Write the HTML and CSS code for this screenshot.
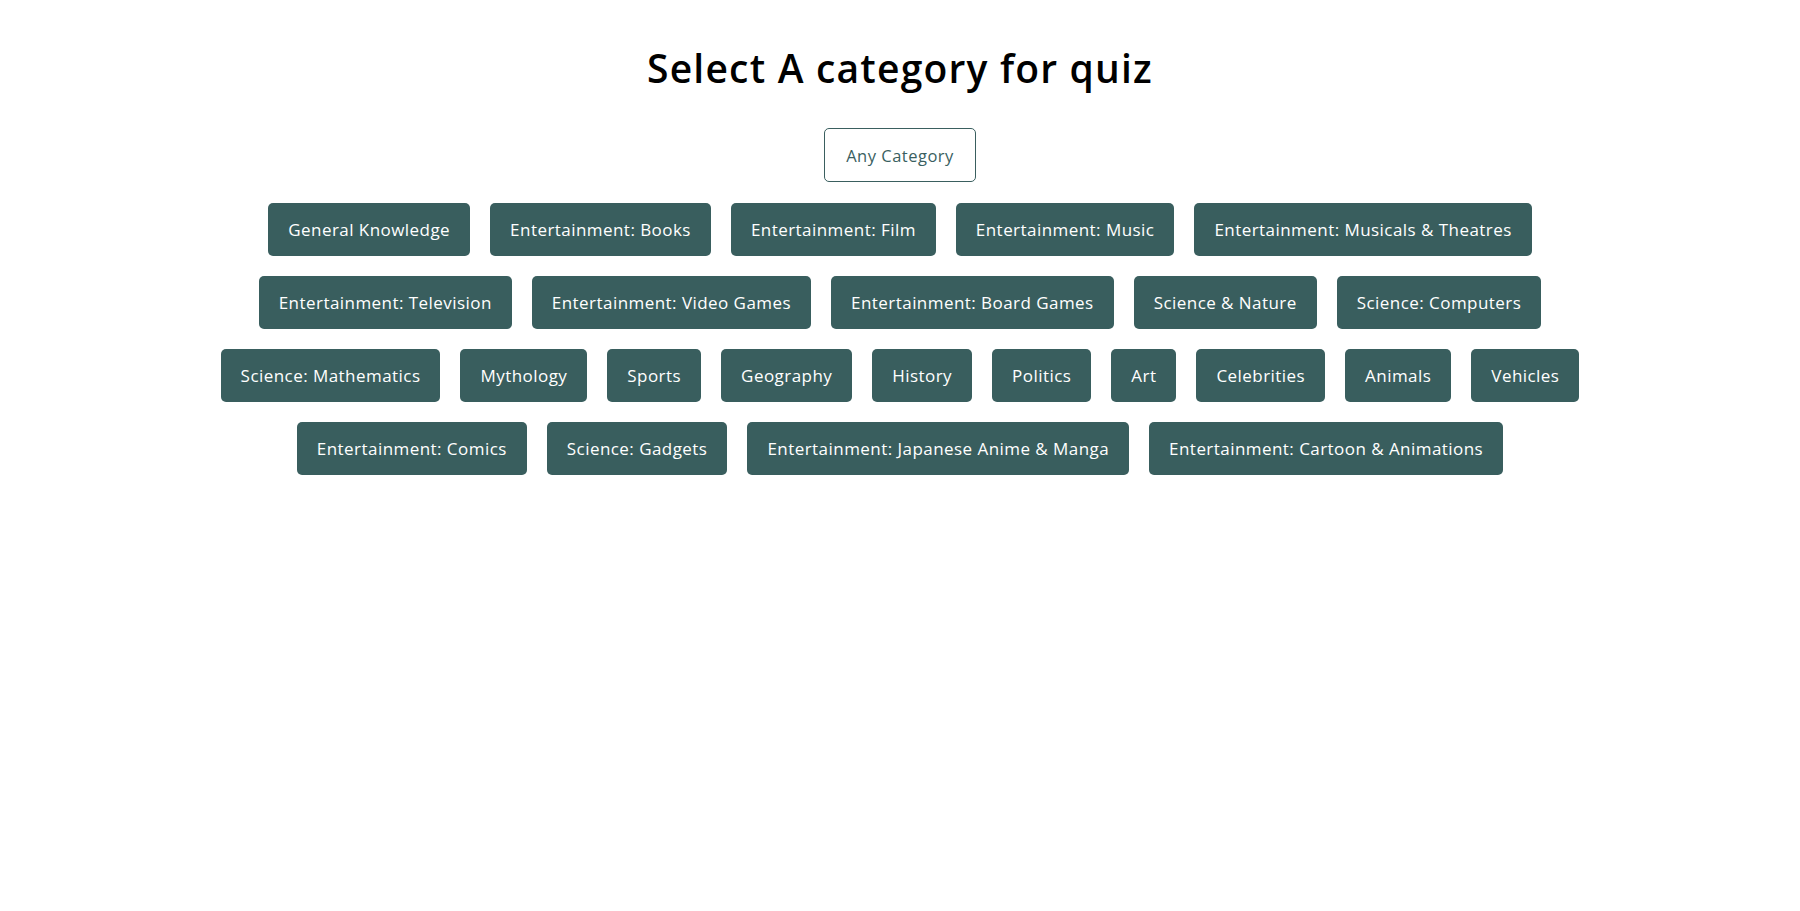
FILE: index.html
```html
<!DOCTYPE html>
<html lang="en">
<head>
<meta charset="utf-8">
<title>Quiz Categories</title>
<link rel="stylesheet" href="styles.css">
</head>
<body>
<main class="page">
  <h1 class="title">Select A category for quiz</h1>
  <button class="any-btn">Any Category</button>
  <div class="categories">
    <button class="cat-btn">General Knowledge</button>
    <button class="cat-btn">Entertainment: Books</button>
    <button class="cat-btn">Entertainment: Film</button>
    <button class="cat-btn">Entertainment: Music</button>
    <button class="cat-btn">Entertainment: Musicals &amp; Theatres</button>
    <button class="cat-btn">Entertainment: Television</button>
    <button class="cat-btn">Entertainment: Video Games</button>
    <button class="cat-btn">Entertainment: Board Games</button>
    <button class="cat-btn">Science &amp; Nature</button>
    <button class="cat-btn">Science: Computers</button>
    <button class="cat-btn">Science: Mathematics</button>
    <button class="cat-btn">Mythology</button>
    <button class="cat-btn">Sports</button>
    <button class="cat-btn">Geography</button>
    <button class="cat-btn">History</button>
    <button class="cat-btn">Politics</button>
    <button class="cat-btn">Art</button>
    <button class="cat-btn">Celebrities</button>
    <button class="cat-btn">Animals</button>
    <button class="cat-btn">Vehicles</button>
    <button class="cat-btn">Entertainment: Comics</button>
    <button class="cat-btn">Science: Gadgets</button>
    <button class="cat-btn">Entertainment: Japanese Anime &amp; Manga</button>
    <button class="cat-btn">Entertainment: Cartoon &amp; Animations</button>
  </div>
</main>
</body>
</html>
```

FILE: styles.css
```css
* { box-sizing: border-box; }
html, body { margin: 0; padding: 0; background: #ffffff; }
body {
  font-family: "Open Sans", "Liberation Sans", sans-serif;
  color: #000;
}
.page {
  display: flex;
  flex-direction: column;
  align-items: center;
  padding-top: 39px;
}
.title {
  margin: 0;
  font-size: 39px;
  font-weight: 600;
  line-height: 58px;
  letter-spacing: 1.2px;
}
.any-btn {
  margin-top: 31px;
  height: 54px;
  padding: 0 21px;
  font-family: inherit;
  font-size: 16.5px;
  letter-spacing: 0.5px;
  color: #3a5f5f;
  background: #fff;
  border: 1px solid #3a5f5f;
  border-radius: 5px;
}
.categories {
  margin-top: 21px;
  width: 1440px;
  display: flex;
  flex-wrap: wrap;
  justify-content: center;
  gap: 20px;
}
.cat-btn {
  height: 53px;
  padding: 0 20px;
  font-family: inherit;
  font-size: 17px;
  letter-spacing: 0.45px;
  color: #ffffff;
  background: #395e5e;
  border: none;
  border-radius: 5px;
}
```
